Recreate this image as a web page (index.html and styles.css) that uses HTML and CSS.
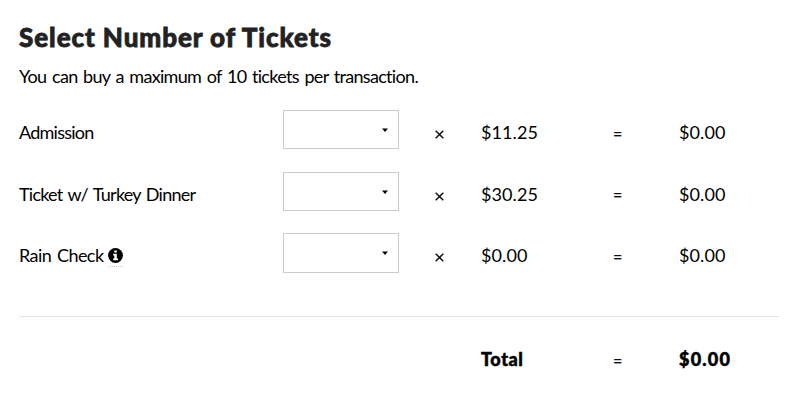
FILE: index.html
```html
<!DOCTYPE html>
<html lang="en">
<head>
  <meta charset="UTF-8" />
  <meta name="viewport" content="width=device-width, initial-scale=1" />
  <title>Select Number of Tickets</title>
  <link rel="stylesheet" href="styles.css">
</head>
<body>

  <h2>Select Number of Tickets</h2>
  <p class="intro">You can buy a maximum of 10 tickets per transaction.</p>

  <form id="ticket-form">
    <div class="row">
      <label class="name" for="admission">Admission</label>
      <div class="quantity">
        <select id="admission"></select>
        <svg class="arrow" viewBox="0 0 6 4"><path d="M0 .5h6L3 4z"/></svg>
      </div>
      <svg class="times" viewBox="0 0 9 9"><path d="M.7 .7l7.6 7.6M8.3 .7L.7 8.3"/></svg>
      <span class="price">$11.25</span>
      <span class="equals">=</span>
      <span class="amount">$0.00</span>
    </div>

    <div class="row">
      <label class="name" for="dinner">Ticket w/ Turkey Dinner</label>
      <div class="quantity">
        <select id="dinner"></select>
        <svg class="arrow" viewBox="0 0 6 4"><path d="M0 .5h6L3 4z"/></svg>
      </div>
      <svg class="times" viewBox="0 0 9 9"><path d="M.7 .7l7.6 7.6M8.3 .7L.7 8.3"/></svg>
      <span class="price">$30.25</span>
      <span class="equals">=</span>
      <span class="amount">$0.00</span>
    </div>

    <div class="row">
      <div class="name">
        <label class="rain" for="rain-check">Rain Check</label>
        <span class="info">
          <svg viewBox="0 0 16 16"><circle cx="8" cy="8" r="7.9"/><path d="M6.7 2.6h2.7v2.2H6.7zM5.5 6.2h3.9v5h1.3V13H5.5v-1.8h1.2V8H5.5z" fill="#fff"/></svg>
        </span>
      </div>
      <div class="quantity">
        <select id="rain-check"></select>
        <svg class="arrow" viewBox="0 0 6 4"><path d="M0 .5h6L3 4z"/></svg>
      </div>
      <svg class="times" viewBox="0 0 9 9"><path d="M.7 .7l7.6 7.6M8.3 .7L.7 8.3"/></svg>
      <span class="price">$0.00</span>
      <span class="equals">=</span>
      <span class="amount">$0.00</span>
    </div>

    <div class="row total">
      <span class="price">Total</span>
      <span class="equals">=</span>
      <span class="amount">$0.00</span>
    </div>
  </form>

</body>
</html>
```

FILE: styles.css
```css
body {
  margin: 0;
  padding: 19px 21px 0 19px;
  background: #fff;
  color: #000;
  font-family: Lato, sans-serif;
  font-size: 18px;
  font-variant-ligatures: none;
  line-height: 24px;
}
h2 {
  margin: 0;
  color: #222;
  font-size: 26px;
  font-weight: 900;
  line-height: 36px;
  letter-spacing: 0.93px;
  -webkit-text-stroke: 0.8px #222;
}
.intro {
  margin: 9px 0 22px;
  letter-spacing: -0.68px;
  word-spacing: 1.6px;
}
.row {
  display: grid;
  grid-template-columns: 264px 152px 46px 132px 66px 1fr;
  align-items: center;
  height: 40px;
  margin-bottom: 21.6px;
}
.name {
  display: flex;
  align-items: center;
  padding-top: 4px;
  letter-spacing: -0.75px;
  word-spacing: 1.6px;
}
.rain {
  letter-spacing: -0.55px;
}
.quantity {
  position: relative;
  width: 116px;
  height: 40px;
}
select {
  display: block;
  width: 116px;
  height: 39.4px;
  border: 1px solid #ccc;
  border-radius: 0;
  background: #fff;
  appearance: none;
}
.arrow {
  position: absolute;
  top: 18px;
  right: 11px;
  width: 6px;
  height: 4px;
}
.times {
  width: 9px;
  height: 9px;
  margin-top: 9px;
  fill: none;
  stroke: #111;
  stroke-width: 1.5;
}
.price, .amount {
  padding-top: 4px;
  letter-spacing: 0.1px;
}
.equals {
  padding-top: 7px;
  font-size: 16px;
  -webkit-text-stroke: 0.3px #333;
}
.info {
  margin: 4px 0 0 5px;
  height: 18px;
  border-bottom: 1px dotted #ccc;
}
.info svg {
  display: block;
  width: 15px;
  height: 15px;
}
.total {
  height: 80px;
  margin: 43px 0 0;
  border-top: 1px solid #e5e5e5;
}
.total .price, .total .amount {
  font-weight: 900;
  letter-spacing: 0.6px;
  -webkit-text-stroke: 0.5px #000;
}
.total .price {
  grid-column: 4;
}
.total .amount {
  letter-spacing: 1.2px;
}
```
